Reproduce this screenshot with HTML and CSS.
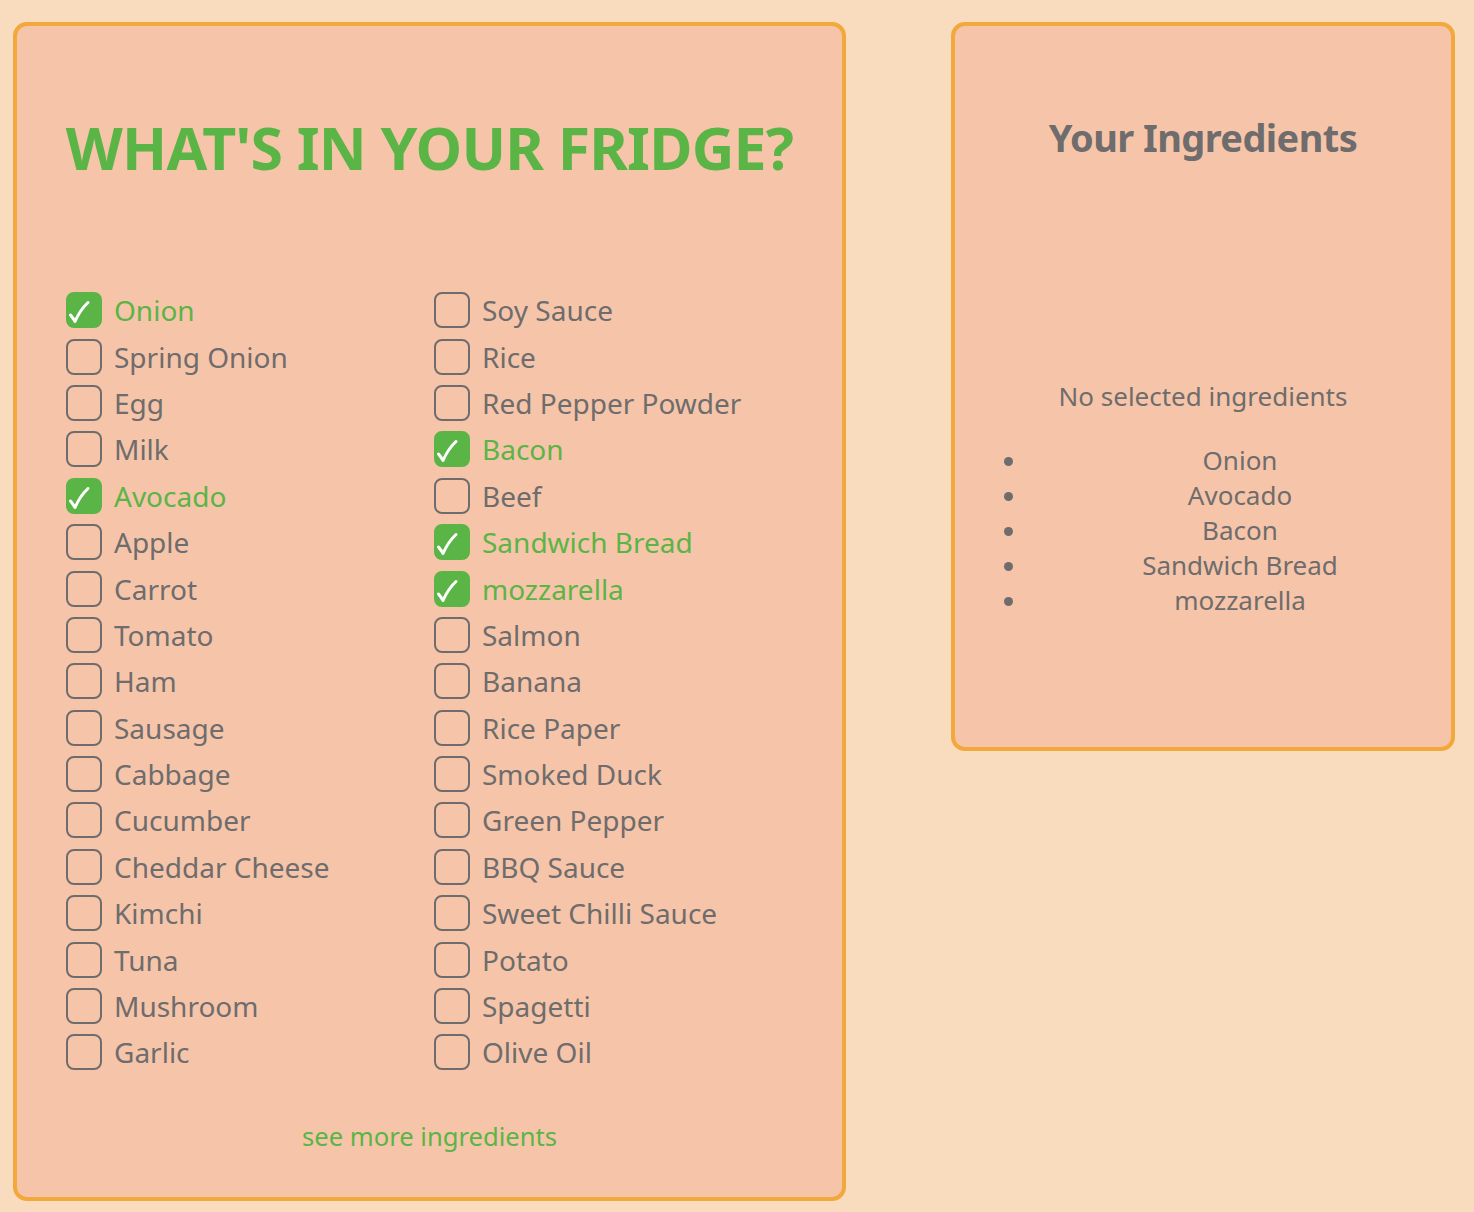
FILE: index.html
```html
<!DOCTYPE html>
<html lang="en">
<head>
  <meta charset="UTF-8">
  <title>What's in your fridge?</title>
  <link rel="stylesheet" href="styles.css">
</head>
<body>
  <div class="page">
    <section class="fridge-card">
      <h1>WHAT'S IN YOUR FRIDGE?</h1>
      <div class="ingredient-grid" id="grid"></div>
      <a class="see-more" href="#">see more ingredients</a>
    </section>
    <aside class="selected-card">
      <h2>Your Ingredients</h2>
      <p class="empty-note">No selected ingredients</p>
      <ul class="selected-list" id="selected"></ul>
    </aside>
  </div>
  <script>
    const left = ["Onion", "Spring Onion", "Egg", "Milk", "Avocado", "Apple", "Carrot", "Tomato", "Ham", "Sausage", "Cabbage", "Cucumber", "Cheddar Cheese", "Kimchi", "Tuna", "Mushroom", "Garlic"];
    const right = ["Soy Sauce", "Rice", "Red Pepper Powder", "Bacon", "Beef", "Sandwich Bread", "mozzarella", "Salmon", "Banana", "Rice Paper", "Smoked Duck", "Green Pepper", "BBQ Sauce", "Sweet Chilli Sauce", "Potato", "Spagetti", "Olive Oil"];
    const checked = ["Onion", "Avocado", "Bacon", "Sandwich Bread", "mozzarella"];

    const grid = document.getElementById("grid");
    const check = '<svg viewBox="0 0 36 36" width="36" height="36"><path d="M4.5 23 Q7 26 9 29.5 Q14 18 22 10.5" fill="none" stroke="#fff" stroke-width="3" stroke-linecap="round" stroke-linejoin="round"/></svg>';

    [left, right].forEach(col => {
      const column = document.createElement("div");
      column.className = "ingredient-col";
      col.forEach(name => {
        const item = document.createElement("label");
        item.className = "ingredient" + (checked.includes(name) ? " is-checked" : "");
        item.innerHTML = '<span class="box">' + (checked.includes(name) ? check : '') + '</span><span class="name">' + name + '</span>';
        column.appendChild(item);
      });
      grid.appendChild(column);
    });

    const list = document.getElementById("selected");
    checked.forEach(name => {
      const li = document.createElement("li");
      li.textContent = name;
      list.appendChild(li);
    });
  </script>
</body>
</html>
```

FILE: styles.css
```css
:root {
  --page-bg: #f9dcbd;
  --card-bg: #f6c5a9;
  --border: #f2a83a;
  --green: #5bb446;
  --text: #6e6c6c;
}
body {
  margin: 0;
  background: var(--page-bg);
  color: var(--text);
  font-family: 'Noto Sans', 'Open Sans', sans-serif;
}
.page {
  display: flex;
  align-items: flex-start;
  gap: 105px;
  padding: 22px 19px 12px 13px;
}
.fridge-card,
.selected-card {
  box-sizing: border-box;
  background: var(--card-bg);
  border: 4px solid var(--border);
  border-radius: 14px;
}
.fridge-card {
  width: 833px;
  padding: 85px 36px 43px 49px;
  display: flex;
  flex-direction: column;
}
.fridge-card h1 {
  margin: 0 0 0 -13px;
  text-align: center;
  white-space: nowrap;
  color: var(--green);
  font-size: 59px;
  font-weight: 700;
  line-height: 72px;
  letter-spacing: -0.8px;
}
.ingredient-grid {
  display: grid;
  grid-template-columns: 368px 1fr;
  margin-top: 104px;
}
.ingredient-col {
  display: flex;
  flex-direction: column;
}
.ingredient {
  display: flex;
  align-items: center;
  height: 46.4px;
  font-size: 28px;
}
.box {
  box-sizing: border-box;
  width: 36px;
  height: 36px;
  border: 2px solid var(--text);
  border-radius: 8px;
  margin-right: 12px;
  flex-shrink: 0;
  position: relative;
}
.box svg {
  position: absolute;
  left: -2px;
  top: -2px;
}
.is-checked {
  color: var(--green);
}
.is-checked .box {
  background: var(--green);
  border-color: var(--green);
}
.see-more {
  margin: 43px 0 0 -13px;
  text-align: center;
  color: var(--green);
  text-decoration: none;
  font-size: 25.6px;
}
.selected-card {
  width: 504px;
  height: 729px;
  padding: 83px 0 0;
  text-align: center;
}
.selected-card h2 {
  margin: 0;
  font-size: 38px;
  font-weight: 700;
  line-height: 56px;
  letter-spacing: -0.6px;
}
.empty-note {
  margin: 213px 0 0;
  font-size: 26px;
  line-height: 36px;
}
.selected-list {
  margin: 29px 0 0;
  padding: 0 0 0 74px;
  font-size: 26px;
  line-height: 35px;
}
```
